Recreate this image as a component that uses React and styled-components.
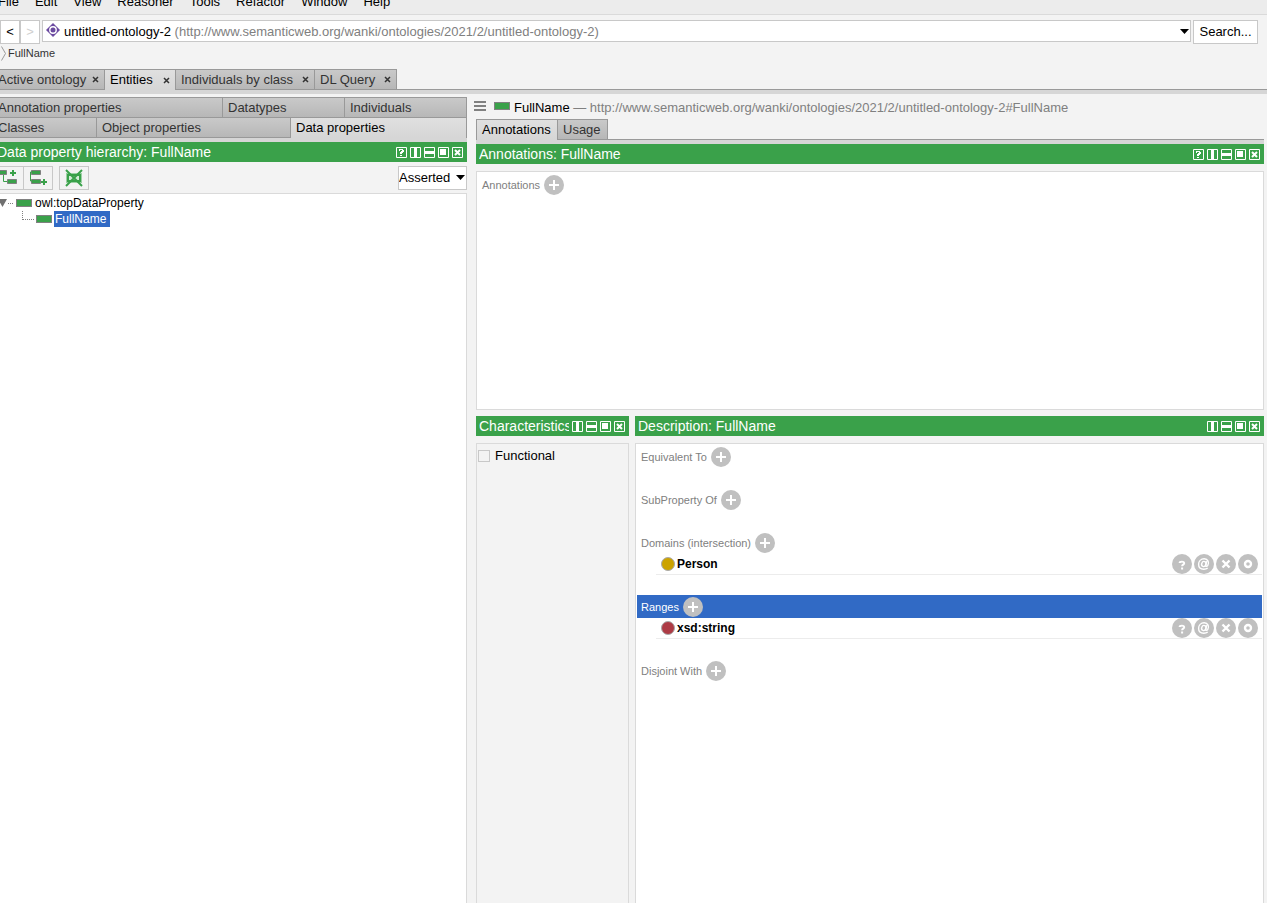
import React from "react";
import styled, { createGlobalStyle, css } from "styled-components";

const GREEN = "#3aa14a";
const LINE = "#d6d6d6";
const TAB_LINE = "#999999";

const GlobalStyle = createGlobalStyle`
  * { box-sizing: border-box; }
  body {
    margin: 0;
    background: #f3f3f3;
    color: #000;
    font: 13px/16px "Liberation Sans", Arial, sans-serif;
  }
  button, select, input { font: inherit; color: inherit; margin: 0; }
  ul { list-style: none; margin: 0; padding: 0; }
  h1, h2 { margin: 0; font-weight: normal; }
  svg { display: block; flex: none; }
`;

const Shell = styled.div`
  display: flex;
  flex-direction: column;
  height: 100vh;
  overflow: hidden;
`;

/* Menu and address bars */
const MenuBar = styled.nav`
  display: flex;
  flex: none;
  height: 23px;
  margin: -8px 0 0 -10px;
  background: #ececec;
  border-bottom: 1px solid #dadada;
`;

const MenuItem = styled.button`
  height: 20px;
  line-height: 20px;
  padding: 0 8px;
  border: 0;
  background: none;
`;

const AddressBar = styled.div`
  display: flex;
  align-items: flex-start;
  gap: 2px;
  padding: 5px 9px 0 0;
`;

const NavButtons = styled.div`
  display: flex;
`;

const BoxButton = styled.button`
  height: 24px;
  min-width: ${(p) => p.$width || 20}px;
  padding: 0;
  border: 1px solid #c8c8c8;
  background: #fff;
  white-space: nowrap;
  &:disabled { color: #cfcfcf; }
`;

const OntologyPicker = styled.div`
  position: relative;
  flex: 1;
  min-width: 0;
  height: 22px;
  display: flex;
  align-items: center;
  gap: 4px;
  padding: 0 1px 0 3px;
  border: 1px solid #c8c8c8;
  background: #fff;
  white-space: nowrap;
  overflow: hidden;
`;

const PickerText = styled.span`
  flex: 1;
  min-width: 0;
  overflow: hidden;
  line-height: 18px;
  padding-top: 2px;
`;

const OntologyIcon = styled.svg`
  margin-bottom: 2px;
`;

const Muted = styled.span`
  color: #808080;
`;

const HiddenSelect = styled.select`
  position: absolute;
  inset: 0;
  width: 100%;
  opacity: 0;
`;

const Breadcrumb = styled.div`
  display: flex;
  align-items: center;
  gap: 2px;
  height: 18px;
  margin-bottom: 7px;
  padding-left: 1px;
  font-size: 11px;
  color: #333;
`;

/* Tabs */
const tabFace = css`
  border: 0 solid ${TAB_LINE};
  border-width: 1px 0 0 1px;
  background: ${(p) =>
    p.$active
      ? "linear-gradient(#e0e0e0, #d6d6d6)"
      : "linear-gradient(#c9c9c9, #b7b7b7)"};
  color: ${(p) => (p.$active ? "#000" : "#333")};
  text-align: left;
  white-space: nowrap;
`;

const TabStrip = styled.div`
  display: flex;
  flex: none;
  height: 25px;
  padding-bottom: 4px;
  margin-left: ${(p) => p.$shift || 0}px;
  background: linear-gradient(${LINE}, ${LINE}) bottom / 100% 4px no-repeat,
    linear-gradient(${TAB_LINE}, ${TAB_LINE}) 0 20px / 100% 1px no-repeat;
`;

const Tab = styled.button`
  ${tabFace}
  display: flex;
  align-items: center;
  justify-content: space-between;
  width: ${(p) => p.$width}px;
  height: 21px;
  padding: 0 5px;
  border-bottom-width: ${(p) => (p.$active ? 0 : 1)}px;
  &:last-child { border-right-width: 1px; }
`;

const GridTabs = styled.div`
  flex: none;
  margin-left: -8px;
  border-right: 1px solid ${TAB_LINE};
`;

const GridTabRow = styled.div`
  display: grid;
  grid-template-columns: ${(p) => p.$columns};
`;

const GridTab = styled.button`
  ${tabFace}
  height: ${(p) => (p.$last ? 21 : 20)}px;
  padding: 0 5px;
  border-bottom-width: ${(p) => (p.$last && !p.$active ? 1 : 0)}px;
`;

const StripBase = styled.div`
  flex: none;
  height: 4px;
  background: ${LINE};
`;

/* Workspace */
const Workspace = styled.main`
  flex: 1;
  min-height: 0;
  display: grid;
  grid-template-columns: minmax(0, 467fr) minmax(0, 788fr);
  gap: 9px;
  padding: 3px 3px 0 0;
`;

const Column = styled.section`
  display: flex;
  flex-direction: column;
  min-width: 0;
  min-height: 0;
`;

const PaneHeader = styled.header`
  display: flex;
  flex: none;
  align-items: center;
  gap: 3px;
  height: 20px;
  padding: 0 4px 0 3px;
  margin-left: ${(p) => p.$shift || 0}px;
  background: ${GREEN};
  color: #fff;
`;

const PaneTitle = styled.h2`
  flex: 1;
  min-width: 0;
  overflow: hidden;
  white-space: nowrap;
  font-size: 14px;
  line-height: 20px;
`;

const PaneTools = styled.div`
  display: flex;
  gap: 3px;
`;

const IconButton = styled.button`
  display: block;
  padding: 0;
  border: 0;
  background: none;
  line-height: 0;
`;

const Toolbar = styled.div`
  display: flex;
  flex: none;
  align-items: center;
  height: 31px;
  margin-left: -6px;
`;

const ToolButton = styled.button`
  display: grid;
  place-items: center;
  width: 30px;
  height: 24px;
  padding: 0;
  margin: 0 ${(p) => (p.$gap ? 6 : -1)}px 0 0;
  border: 1px solid #c8c8c8;
  background: #f3f3f3;
`;

const ModeBox = styled.label`
  display: flex;
  align-items: center;
  justify-content: space-between;
  width: 69px;
  height: 24px;
  margin-left: auto;
  padding-right: 1px;
  border: 1px solid #c8c8c8;
  background: #fff;
`;

const ModeSelect = styled.select`
  appearance: none;
  width: 56px;
  padding: 0;
  border: 0;
  background: none;
`;

const Tree = styled.div`
  flex: 1;
  padding-top: 1px;
  border: 1px solid #dadada;
  border-width: 1px 1px 0 0;
  background: #fff;
  font-size: 12px;
`;

const TreeRow = styled.li`
  display: flex;
  align-items: center;
  height: 16px;
  gap: 2px;
  padding-left: ${(p) => p.$indent}px;
`;

const TreeLabel = styled.span`
  padding: 0 4px 0 1px;
  ${(p) => p.$selected && css`
    background: #316ac5;
    color: #fff;
  `}
`;

const PropertySwatch = styled.span`
  flex: none;
  width: 16px;
  height: 8px;
  border: 1px solid #808080;
  background: ${GREEN};
`;

const EntityLine = styled.div`
  display: flex;
  flex: none;
  align-items: center;
  height: 22px;
  margin-left: -2px;
  gap: 4px;
  white-space: nowrap;
  & > button, & > ${PropertySwatch} { margin-bottom: 4px; }
`;

const EntityTitle = styled.h1`
  font-size: 13px;
  line-height: 16px;
`;

const MenuIconButton = styled(IconButton)`
  margin-right: 4px;
`;

const Box = styled.div`
  flex: 1;
  min-height: 0;
  margin-top: 7px;
  padding: ${(p) => (p.$tight ? "0 1px" : "1px")};
  border: 1px solid #dadada;
  border-bottom-width: ${(p) => (p.$open ? 0 : 1)}px;
  background: ${(p) => (p.$plain ? "#f3f3f3" : "#fff")};
`;

const AnnotationsPane = styled.div`
  flex: 266;
  min-height: 0;
  display: flex;
  flex-direction: column;
`;

const LowerPanes = styled.div`
  flex: 487;
  min-height: 0;
  margin-top: 6px;
  display: grid;
  grid-template-columns: minmax(0, 153fr) minmax(0, 629fr);
  gap: 6px;
`;

const CheckRow = styled.label`
  display: flex;
  align-items: center;
  gap: 5px;
  height: 22px;
`;

const CheckBox = styled.input`
  appearance: none;
  width: 12px;
  height: 12px;
  border: 1px solid #c8c8c8;
  background: #f3f3f3;
`;

const Section = styled.section`
  margin-bottom: 20px;
`;

const SectionHead = styled.div`
  display: flex;
  align-items: center;
  gap: 4px;
  height: 23px;
  padding-left: 4px;
  font-size: 11px;
  color: ${(p) => (p.$selected ? "#fff" : "#808080")};
  background: ${(p) => (p.$selected ? "#316ac5" : "none")};
`;

const ValueRow = styled.div`
  display: flex;
  align-items: center;
  gap: 2px;
  height: 21px;
  margin-left: 19px;
  padding: 0 4px 0 5px;
  border-bottom: 1px solid #ececec;
  font-size: 12px;
  font-weight: bold;
`;

const Dot = styled.span`
  width: 14px;
  height: 14px;
  border: 1px solid #a9a9a9;
  border-radius: 50%;
  background: ${(p) => p.$color};
`;

const RowTools = styled.div`
  display: flex;
  gap: 2px;
  margin-left: auto;
`;

const paneGlyphs = {
  help: <path d="M3 2h4v1h1v2h-1v1h-1v1h-2v-2h1v-1h1v-1h-2v1h-1zM4 8h2v1h-2z" fill="#fff" />,
  columns: <path d="M4 1h3v9H4z" fill="#fff" />,
  rows: <path d="M1 4h9v3H1z" fill="#fff" />,
  float: <path d="M2 2h6v6H2z" fill="#fff" />,
  close: <path d="M3 3l5 5M8 3L3 8" stroke="#fff" strokeWidth="2" />,
};

function PaneIcon({ kind }) {
  return (
    <IconButton aria-label={kind}>
      <svg width="11" height="11" viewBox="0 0 11 11">
        <path d="M.5.5h10v10H.5z" fill="none" stroke="#fff" />
        {paneGlyphs[kind]}
      </svg>
    </IconButton>
  );
}

function Pane({ title, help, shift }) {
  const kinds = ["columns", "rows", "float", "close"];
  return (
    <PaneHeader $shift={shift}>
      <PaneTitle>{title}</PaneTitle>
      <PaneTools>
        {(help ? ["help", ...kinds] : kinds).map((k) => (
          <PaneIcon key={k} kind={k} />
        ))}
      </PaneTools>
    </PaneHeader>
  );
}

const roundGlyphs = {
  Add: <path d="M10 5v10M5 10h10" stroke="#fff" strokeWidth="2" />,
  Explain: (
    <path d="M7.600 9C7.600 7.200 12.200 7 12.200 9.200c0 1.500-2.100 1.300-2.100 3M9.100 14.500h2" fill="none" stroke="#fff" strokeWidth="1.9" />
  ),
  Annotate: (
    <g fill="none" stroke="#fff" strokeWidth="1.4">
      <ellipse cx="9.800" cy="10" rx="2.100" ry="2.600" transform="rotate(20 9.800 10)" />
      <path d="M12.600 7.200l-.9 4.400c-.2 1.200 1.300 1 2.100-.2 1.600-2.600.3-6.600-3.600-6.600-3.300 0-5.600 2.400-5.600 5.400 0 3.200 2.300 5 5.200 5 1.600 0 2.900-.4 3.900-1.200" />
    </g>
  ),
  Delete: <path d="M6.500 6.500l7 7M13.500 6.500l-7 7" stroke="#fff" strokeWidth="2.400" />,
  Edit: <circle cx="10" cy="10" r="3" fill="none" stroke="#fff" strokeWidth="2.400" />,
};

function RoundButton({ kind }) {
  return (
    <IconButton aria-label={kind}>
      <svg width="20" height="20" viewBox="0 0 20 20">
        <circle cx="10" cy="10" r="10" fill="#c0c0c0" />
        {roundGlyphs[kind]}
      </svg>
    </IconButton>
  );
}

function Caret() {
  return (
    <svg width="9" height="5" viewBox="0 0 9 5">
      <path d="M0 0h9L4.500 5z" fill="#000" />
    </svg>
  );
}

function CloseMark() {
  return (
    <svg width="7" height="7" viewBox="0 0 7 7">
      <path d="M1 1l5 5M6 1L1 6" stroke="#333" strokeWidth="1.500" />
    </svg>
  );
}

function DescriptionSection({ label, value, color, selected }) {
  return (
    <Section>
      <SectionHead $selected={selected}>
        {label}
        <RoundButton kind="Add" />
      </SectionHead>
      {value && (
        <ValueRow>
          <Dot $color={color} />
          {value}
          <RowTools>
            {["Explain", "Annotate", "Delete", "Edit"].map((k) => (
              <RoundButton key={k} kind={k} />
            ))}
          </RowTools>
        </ValueRow>
      )}
    </Section>
  );
}

const menus = ["File", "Edit", "View", "Reasoner", "Tools", "Refactor", "Window", "Help"];
const mainTabs = [
  { label: "Active ontology", width: 112 },
  { label: "Entities", width: 71, active: true },
  { label: "Individuals by class", width: 139 },
  { label: "DL Query", width: 83 },
];
const sections = [
  { label: "Equivalent To" },
  { label: "SubProperty Of" },
  { label: "Domains (intersection)", value: "Person", color: "#cca300" },
  { label: "Ranges", value: "xsd:string", color: "#ad3b45", selected: true },
  { label: "Disjoint With" },
];

export default function App() {
  return (
    <Shell>
      <GlobalStyle />
      <MenuBar>
        {menus.map((m) => (
          <MenuItem key={m}>{m}</MenuItem>
        ))}
      </MenuBar>
      <AddressBar>
        <NavButtons>
          <BoxButton>&lt;</BoxButton>
          <BoxButton disabled>&gt;</BoxButton>
        </NavButtons>
        <OntologyPicker>
          <OntologyIcon width="14" height="14" viewBox="0 0 14 14">
            <path d="M7 0l7 7-7 7-7-7z" fill="#6b4aa0" />
            <circle cx="7" cy="7" r="3.200" fill="#6b4aa0" stroke="#fff" strokeWidth="1.400" />
          </OntologyIcon>
          <PickerText>
            untitled-ontology-2{" "}
            <Muted>(http://www.semanticweb.org/wanki/ontologies/2021/2/untitled-ontology-2)</Muted>
          </PickerText>
          <Caret />
          <HiddenSelect aria-label="Active ontology">
            <option>untitled-ontology-2</option>
          </HiddenSelect>
        </OntologyPicker>
        <BoxButton $width={65}>Search...</BoxButton>
      </AddressBar>
      <Breadcrumb>
        <svg width="5" height="15" viewBox="0 0 5 15">
          <path d="M.5.5l4 7-4 7" fill="none" stroke="#999" />
        </svg>
        FullName
      </Breadcrumb>
      <TabStrip $shift={-8} role="tablist">
        {mainTabs.map((t) => (
          <Tab key={t.label} role="tab" $width={t.width} $active={t.active}>
            {t.label}
            <CloseMark />
          </Tab>
        ))}
      </TabStrip>
      <Workspace>
        <Column>
          <GridTabs role="tablist">
            <GridTabRow $columns="230fr 122fr 122fr">
              <GridTab role="tab">Annotation properties</GridTab>
              <GridTab role="tab">Datatypes</GridTab>
              <GridTab role="tab">Individuals</GridTab>
            </GridTabRow>
            <GridTabRow $columns="104fr 194fr 176fr">
              <GridTab role="tab" $last>Classes</GridTab>
              <GridTab role="tab" $last>Object properties</GridTab>
              <GridTab role="tab" $last $active>Data properties</GridTab>
            </GridTabRow>
          </GridTabs>
          <StripBase />
          <Pane title="Data property hierarchy: FullName" help shift={-6} />
          <Toolbar>
            <ToolButton aria-label="Add sub property">
              <svg width="20" height="18" viewBox="0 0 20 18">
                <path d="M4.500 5v7.500H9" fill="none" stroke={GREEN} />
                <path d="M-.5 1.500h8v4h-8zM8.500 10.500h9v4h-9z" fill={GREEN} stroke="#808080" />
                <path d="M11 4h6M14 1v6" fill="none" stroke={GREEN} strokeWidth="2" />
              </svg>
            </ToolButton>
            <ToolButton aria-label="Add sibling property" $gap>
              <svg width="18" height="18" viewBox="0 0 18 18">
                <path d="M2.500 1.500h9v4h-9zM2.500 10.500h9v4h-9z" fill={GREEN} stroke="#808080" />
                <path d="M3 3H1.500v9H3" fill="none" stroke={GREEN} />
                <path d="M12 13h6M15 10v6" fill="none" stroke={GREEN} strokeWidth="2" />
              </svg>
            </ToolButton>
            <ToolButton aria-label="Delete property">
              <svg width="18" height="18" viewBox="0 0 18 18">
                <path d="M1 4h16v10H1z" fill="#9bd0a3" />
                <path d="M3 6h12v6H3z" fill="#d5ecd9" stroke={GREEN} strokeWidth="2" />
                <path d="M1 1l16 16M17 1L1 17" stroke={GREEN} strokeWidth="2" />
              </svg>
            </ToolButton>
            <ModeBox>
              <ModeSelect aria-label="View mode">
                <option>Asserted</option>
              </ModeSelect>
              <Caret />
            </ModeBox>
          </Toolbar>
          <Tree>
            <ul>
              <TreeRow $indent={0}>
                <svg width="14" height="16" viewBox="0 0 14 16">
                  <path d="M-2 4h9L2.500 12z" fill="#707070" />
                  <path d="M8 8.500h6" stroke="#808080" strokeDasharray="1 1" />
                </svg>
                <PropertySwatch />
                <TreeLabel>owl:topDataProperty</TreeLabel>
              </TreeRow>
              <TreeRow $indent={22}>
                <svg width="12" height="16" viewBox="0 0 12 16">
                  <path d="M.5 0v9M1 8.500h11" fill="none" stroke="#808080" strokeDasharray="1 1" />
                </svg>
                <PropertySwatch />
                <TreeLabel $selected>FullName</TreeLabel>
              </TreeRow>
            </ul>
          </Tree>
        </Column>
        <Column>
          <EntityLine>
            <MenuIconButton aria-label="Menu">
              <svg width="12" height="10" viewBox="0 0 12 10">
                <path d="M0 0h12v2H0zM0 4h12v2H0zM0 8h12v2H0z" fill="#808080" />
              </svg>
            </MenuIconButton>
            <PropertySwatch />
            <EntityTitle>
              FullName <Muted>— http://www.semanticweb.org/wanki/ontologies/2021/2/untitled-ontology-2#FullName</Muted>
            </EntityTitle>
          </EntityLine>
          <TabStrip role="tablist">
            <Tab role="tab" $width={81} $active>Annotations</Tab>
            <Tab role="tab" $width={51}>Usage</Tab>
          </TabStrip>
          <AnnotationsPane>
            <Pane title="Annotations: FullName" help />
            <Box>
              <SectionHead>
                Annotations
                <RoundButton kind="Add" />
              </SectionHead>
            </Box>
          </AnnotationsPane>
          <LowerPanes>
            <Column>
              <Pane title="Characteristics: FullName" />
              <Box $plain $open>
                <CheckRow>
                  <CheckBox type="checkbox" />
                  Functional
                </CheckRow>
              </Box>
            </Column>
            <Column>
              <Pane title="Description: FullName" />
              <Box $open>
                {sections.map((s) => (
                  <DescriptionSection key={s.label} {...s} />
                ))}
              </Box>
            </Column>
          </LowerPanes>
        </Column>
      </Workspace>
    </Shell>
  );
}
